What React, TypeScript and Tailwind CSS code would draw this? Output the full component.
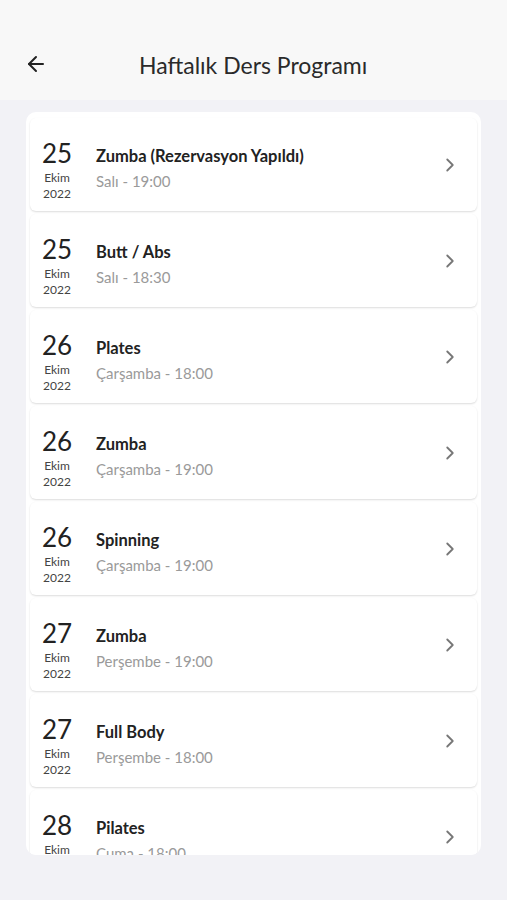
import { ArrowLeft, ChevronRight } from 'lucide-react'

type Lesson = {
  day: string
  name: string
  time: string
}

const LESSONS: Lesson[] = [
  { day: '25', name: 'Zumba (Rezervasyon Yapıldı)', time: 'Salı - 19:00' },
  { day: '25', name: 'Butt / Abs', time: 'Salı - 18:30' },
  { day: '26', name: 'Plates', time: 'Çarşamba - 18:00' },
  { day: '26', name: 'Zumba', time: 'Çarşamba - 19:00' },
  { day: '26', name: 'Spinning', time: 'Çarşamba - 19:00' },
  { day: '27', name: 'Zumba', time: 'Perşembe - 19:00' },
  { day: '27', name: 'Full Body', time: 'Perşembe - 18:00' },
  { day: '28', name: 'Pilates', time: 'Cuma - 18:00' },
]

function LessonCard({ lesson }: { lesson: Lesson }) {
  return (
    <div className="flex h-[93px] shrink-0 items-center rounded-[6px] bg-white pl-3 pr-[16px] shadow-[0_1px_2px_rgba(0,0,0,0.14)]">
      <div className="flex w-[30px] flex-col items-center pt-[12px]">
        <span className="text-[26px] leading-[28px] text-[#222]">{lesson.day}</span>
        <span className="mt-[3px] text-[12px] leading-[16px] text-[#444]">Ekim</span>
        <span className="text-[12px] leading-[16px] text-[#444]">2022</span>
      </div>
      <div className="ml-[24px] flex flex-1 flex-col pt-[8px]">
        <span className="text-[16.5px] font-bold leading-[22px] text-[#222]">{lesson.name}</span>
        <span className="mt-[3px] text-[15px] leading-[22px] text-[#9a9a9a]">{lesson.time}</span>
      </div>
      <ChevronRight size={22} stroke="#777" strokeWidth={2} />
    </div>
  )
}

export default function App() {
  return (
    <div className="flex h-[900px] w-[507px] flex-col bg-[#f2f2f6] font-['Lato',sans-serif]">
      <header className="flex h-[100px] shrink-0 items-end bg-[#f8f8f8] pb-[20px]">
        <div className="flex w-[70px] justify-center pb-[4px] pl-[1px]">
          <ArrowLeft size={24} stroke="#222" strokeWidth={2} />
        </div>
        <h1 className="ml-[69px] text-[23px] leading-[30px] text-[#2a2a2a]">Haftalık Ders Programı</h1>
      </header>
      <div className="mx-[26px] mt-[12px] h-[743px] overflow-hidden rounded-[10px] bg-white">
        <div className="flex flex-col gap-[3px] px-[4px] pt-[6px]">
          {LESSONS.map((lesson, i) => (
            <LessonCard key={i} lesson={lesson} />
          ))}
        </div>
      </div>
    </div>
  )
}
